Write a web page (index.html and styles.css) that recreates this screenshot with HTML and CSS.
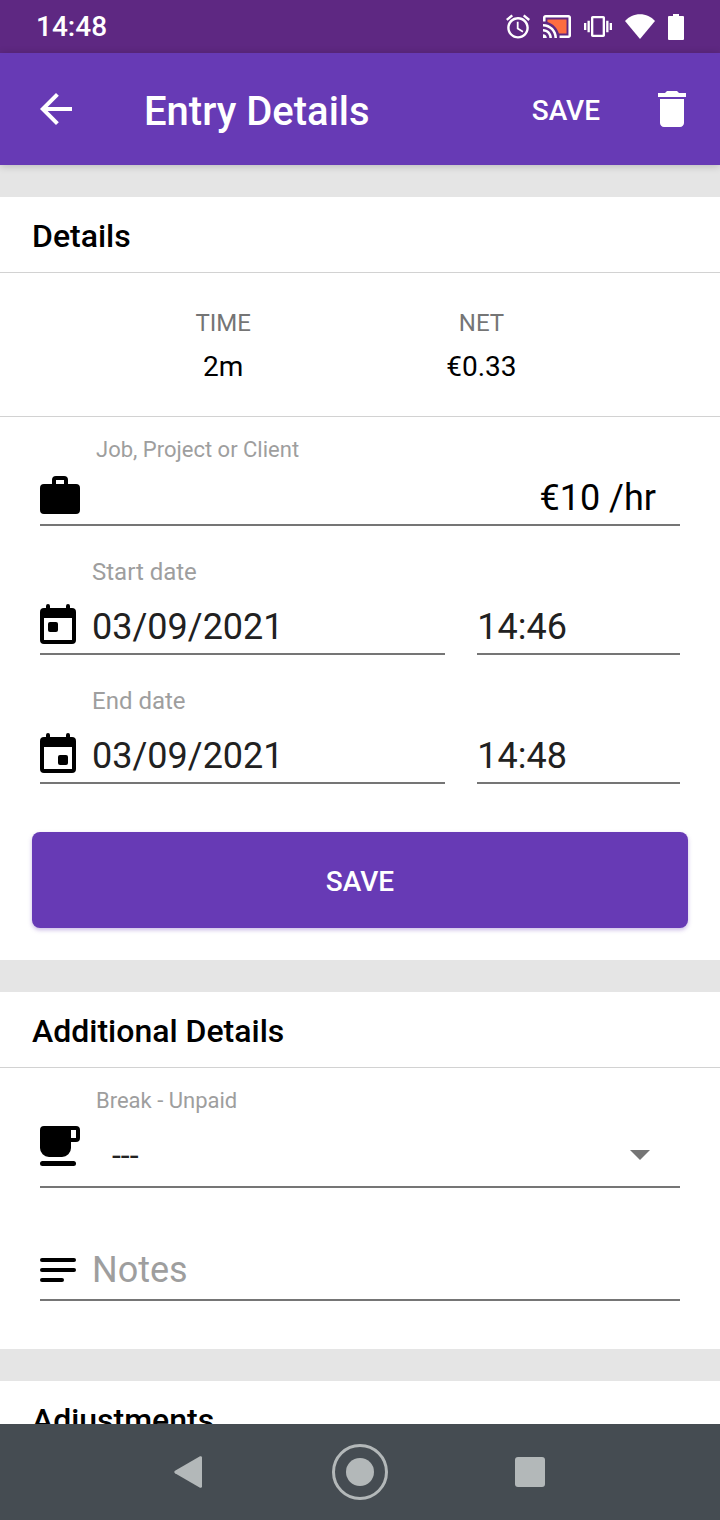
FILE: index.html
```html
<!DOCTYPE html>
<html lang="en">
<head>
    <meta charset="UTF-8">
    <meta name="viewport" content="width=device-width, initial-scale=1.0">
    <title>Entry Details</title>
    <link rel="stylesheet" href="styles.css">
</head>
<body>
    <div class="status-bar">
        <span>14:48</span>
        <div class="status-icons">
            <svg width="24" height="25" viewBox="2 1.86 20 20.14"><path d="M22 5.72l-4.6-3.86-1.29 1.53 4.6 3.86L22 5.72zM7.88 3.39L6.6 1.86 2 5.71l1.29 1.53 4.59-3.85zM12.5 8H11v6l4.75 2.85.75-1.23-4-2.37V8zM12 4c-4.97 0-9 4.03-9 9s4.02 9 9 9c4.97 0 9-4.03 9-9s-4.03-9-9-9zm0 16c-3.87 0-7-3.13-7-7s3.13-7 7-7 7 3.13 7 7-3.13 7-7 7z"/></svg>
            <svg width="28" height="23" viewBox="1 3 22 18"><path class="cast-fill" d="M19.5 6.5H4.5v2c4.2 1.2 7.6 4.5 9 9H19.5z"/><path d="M1 18v3h3c0-1.66-1.34-3-3-3zm0-4v2c2.76 0 5 2.24 5 5h2c0-3.87-3.13-7-7-7zm0-4v2c4.97 0 9 4.03 9 9h2c0-6.08-4.93-11-11-11zm20-7H3c-1.1 0-2 .9-2 2v3h2V5h18v14h-7v2h7c1.1 0 2-.9 2-2V5c0-1.1-.9-2-2-2z"/></svg>
            <svg width="28" height="21" viewBox="0 3 24 18"><path d="M0 15h2V9H0v6zm3 2h2V7H3v10zm19-8v6h2V9h-2zm-3 8h2V7h-2v10zM16.5 3h-9C6.67 3 6 3.67 6 4.5v15c0 .83.67 1.5 1.5 1.5h9c.83 0 1.5-.67 1.5-1.5v-15c0-.83-.67-1.5-1.5-1.5zM16 19H8V5h8v14z"/></svg>
            <svg width="30" height="26" viewBox="0 0 30 26"><path d="M0 7C4 2.700 9 .3 15 .3s11 2.400 15 6.700L15 25z"/></svg>
            <svg width="16" height="26" viewBox="0 0 16 26"><path d="M5 0h6v2h4a1 1 0 0 1 1 1v22a1 1 0 0 1-1 1H1a1 1 0 0 1-1-1V3a1 1 0 0 1 1-1h4z"/></svg>
        </div>
    </div>

    <header class="toolbar">
        <button type="button" class="icon-button" aria-label="Back">
            <svg width="32" height="32" viewBox="4 4 16 16"><path d="M20 11H7.83l5.59-5.59L12 4l-8 8 8 8 1.41-1.41L7.83 13H20v-2z"/></svg>
        </button>
        <h1>Entry Details</h1>
        <button type="submit" form="entry-form" class="toolbar-save">SAVE</button>
        <button type="button" class="icon-button" aria-label="Delete">
            <svg width="28" height="36" viewBox="5 3 14 18"><path d="M6 19c0 1.1.9 2 2 2h8c1.1 0 2-.9 2-2V7H6v12zM19 4h-3.5l-1-1h-5l-1 1H5v2h14V4z"/></svg>
        </button>
    </header>

    <main class="content">
        <form id="entry-form">
            <section class="card">
                <h2>Details</h2>
                <dl class="summary">
                    <div>
                        <dt>TIME</dt>
                        <dd>2m</dd>
                    </div>
                    <div>
                        <dt>NET</dt>
                        <dd>€0.33</dd>
                    </div>
                </dl>

                <div class="field">
                    <label class="small-label" for="job">Job, Project or Client</label>
                    <div class="field-row job-row">
                        <svg width="40" height="38" viewBox="0 0 40 38"><path fill-rule="evenodd" d="M4 8h8V4a4 4 0 0 1 4-4h8a4 4 0 0 1 4 4v4h8a4 4 0 0 1 4 4v22a4 4 0 0 1-4 4H4a4 4 0 0 1-4-4V12a4 4 0 0 1 4-4zM16 4v4h8V4z"/></svg>
                        <input type="text" id="job" name="job">
                        <span class="rate">€10 /hr</span>
                    </div>
                </div>

                <div class="field date-field">
                    <label class="date-label" for="start-date">Start date</label>
                    <div class="date-time">
                        <div class="field-row">
                            <svg width="36" height="40" viewBox="0 0 36 40"><path fill-rule="evenodd" d="M6 4V2a2 2 0 0 1 4 0v2h16V2a2 2 0 0 1 4 0v2h2a4 4 0 0 1 4 4v28a4 4 0 0 1-4 4H4a4 4 0 0 1-4-4V8a4 4 0 0 1 4-4zM4 14v22h28V14z"/><rect x="8" y="18" width="10" height="10" rx="2"/></svg>
                            <input type="text" id="start-date" name="start_date" value="03/09/2021">
                        </div>
                        <div class="field-row">
                            <input type="text" name="start_time" value="14:46" aria-label="Start time">
                        </div>
                    </div>
                </div>

                <div class="field date-field">
                    <label class="date-label" for="end-date">End date</label>
                    <div class="date-time">
                        <div class="field-row">
                            <svg width="36" height="40" viewBox="0 0 36 40"><path fill-rule="evenodd" d="M6 4V2a2 2 0 0 1 4 0v2h16V2a2 2 0 0 1 4 0v2h2a4 4 0 0 1 4 4v28a4 4 0 0 1-4 4H4a4 4 0 0 1-4-4V8a4 4 0 0 1 4-4zM4 14v22h28V14z"/><rect x="18" y="22" width="10" height="10" rx="2"/></svg>
                            <input type="text" id="end-date" name="end_date" value="03/09/2021">
                        </div>
                        <div class="field-row">
                            <input type="text" name="end_time" value="14:48" aria-label="End time">
                        </div>
                    </div>
                </div>

                <button type="submit" class="save-button">SAVE</button>
            </section>

            <section class="card additional">
                <h2>Additional Details</h2>
                <div class="field">
                    <label class="small-label" for="break">Break - Unpaid</label>
                    <div class="field-row break-row">
                        <svg width="40" height="40" viewBox="0 0 40 40"><path fill-rule="evenodd" d="M4 0h32a4 4 0 0 1 4 4v8a4 4 0 0 1-4 4h-5v6a9 9 0 0 1-9 9H9a9 9 0 0 1-9-9V4a4 4 0 0 1 4-4zM31 4v8h5V4z"/><rect y="35" width="36" height="5" rx="2.5"/></svg>
                        <select id="break" name="break">
                            <option>---</option>
                        </select>
                        <svg class="caret" width="20" height="10" viewBox="0 0 20 10"><path d="M0 0h20L10 10z"/></svg>
                    </div>
                </div>

                <div class="field notes-field">
                    <div class="field-row">
                        <svg width="36" height="24" viewBox="0 0 36 24"><rect width="36" height="4" rx="2"/><rect y="10" width="36" height="4" rx="2"/><rect y="20" width="24" height="4" rx="2"/></svg>
                        <input type="text" name="notes" placeholder="Notes" aria-label="Notes">
                    </div>
                </div>
            </section>

            <section class="card">
                <h2>Adjustments</h2>
            </section>
        </form>
    </main>

    <nav class="nav-bar">
        <button type="button" aria-label="Back">
            <svg width="32" height="32" viewBox="0 0 32 32"><path d="M28 1.5v29a1.5 1.5 0 0 1-2 1.2L1 17.2a1.4 1.4 0 0 1 0-2.4L26 .3a1.5 1.5 0 0 1 2 1.2z"/></svg>
        </button>
        <button type="button" aria-label="Home">
            <svg width="56" height="56" viewBox="0 0 56 56"><circle cx="28" cy="28" r="14"/><circle class="ring" cx="28" cy="28" r="26.5"/></svg>
        </button>
        <button type="button" aria-label="Recent apps">
            <svg width="30" height="30" viewBox="0 0 30 30"><rect width="30" height="30" rx="3"/></svg>
        </button>
    </nav>
</body>
</html>
```

FILE: styles.css
```css
* {
    box-sizing: border-box;
}
body {
    display: flex;
    flex-direction: column;
    height: 100vh;
    margin: 0;
    font-family: Roboto, sans-serif;
    color: #000;
    background-color: #e5e5e5;
}
h1, h2, dl, dd {
    margin: 0;
}
svg {
    display: block;
    flex: none;
    fill: currentColor;
}
button, input, select {
    padding: 0;
    border: none;
    outline: none;
    background: none;
    font-family: inherit;
    color: inherit;
}
button {
    cursor: pointer;
}

/* Top bars */
.status-bar {
    display: flex;
    flex: none;
    align-items: center;
    justify-content: space-between;
    height: 53px;
    padding: 0 36px;
    background-color: #5e2882;
    color: #fff;
    font-size: 28px;
    font-weight: 500;
}
.status-icons {
    display: flex;
    align-items: center;
    gap: 13px;
}
.cast-fill {
    fill: #fd6d41;
}
.toolbar {
    display: flex;
    flex: none;
    align-items: center;
    height: 112px;
    padding: 0 34px 0 40px;
    background-color: #673ab5;
    color: #fff;
    box-shadow: 0 1px 8px rgba(0, 0, 0, 0.2);
    z-index: 1;
}
.toolbar h1 {
    flex: 1;
    margin-left: 72px;
    padding-top: 6px;
    font-size: 40px;
    font-weight: 500;
    line-height: 48px;
}
.toolbar-save {
    margin-right: 58px;
    padding-top: 2px;
    font-size: 28px;
    font-weight: 500;
}

/* Scrolling content */
.content {
    flex: 1;
    min-height: 0;
    overflow-y: auto;
    scrollbar-width: none;
}
.card {
    margin-top: 32px;
    padding-bottom: 32px;
    background-color: #fff;
}
.additional {
    padding-bottom: 48px;
}
.card h2 {
    padding: 20px 32px 16px;
    border-bottom: 1px solid #d2d2d2;
    font-size: 32px;
    font-weight: 500;
    line-height: 39px;
}
.summary {
    display: flex;
    justify-content: space-evenly;
    padding: 28px 8px 28px 0;
    border-bottom: 1px solid #d2d2d2;
    text-align: center;
}
.summary dt {
    color: #757575;
    font-size: 24px;
    line-height: 44px;
}
.summary dd {
    font-size: 28px;
    line-height: 43px;
}

/* Fields */
.field {
    padding: 17px 40px 0;
}
.date-field {
    padding-top: 30px;
}
.notes-field {
    padding-top: 57px;
}
.small-label, .date-label {
    display: block;
    color: #9e9e9e;
    line-height: 32px;
}
.small-label {
    margin-bottom: 4px;
    padding-left: 56px;
    font-size: 22px;
}
.date-label {
    margin-bottom: 11px;
    padding-left: 52px;
    font-size: 24px;
}
.date-time {
    display: grid;
    grid-template-columns: minmax(0, 2fr) minmax(0, 1fr);
    gap: 32px;
}
.field-row {
    display: flex;
    align-items: center;
    gap: 16px;
    height: 56px;
    border-bottom: 2px solid #757575;
}
.field-row input, .field-row select {
    flex: 1;
    min-width: 0;
    height: 100%;
    padding-top: 2px;
    color: #212121;
    font-size: 36px;
}
.field-row input::placeholder {
    color: #9e9e9e;
    opacity: 1;
}
.field-row svg:first-child {
    margin-bottom: 4px;
}
.notes-field .field-row input {
    padding: 0 0 4px;
}
.job-row {
    padding-right: 24px;
}
.rate {
    padding-top: 2px;
    font-size: 36px;
}
.break-row {
    height: 67px;
    padding-right: 30px;
}
.break-row svg:first-child {
    margin-bottom: 16px;
}
.break-row select {
    padding-left: 16px;
    appearance: none;
    font-size: 32px;
}
.break-row .caret {
    margin-top: 2px;
    color: #757575;
    pointer-events: none;
}
.save-button {
    display: block;
    width: calc(100% - 64px);
    height: 96px;
    margin: 48px 32px 0;
    padding-top: 2px;
    border-radius: 8px;
    background-color: #673ab5;
    color: #fff;
    font-size: 28px;
    font-weight: 500;
    box-shadow: 0 2px 4px rgba(103, 58, 181, 0.35);
}

/* System navigation */
.nav-bar {
    display: flex;
    flex: none;
    align-items: center;
    justify-content: center;
    gap: 114px;
    height: 96px;
    background-color: #454c52;
    color: #b3b8b9;
}
.nav-bar button {
    display: flex;
    justify-content: center;
    width: 56px;
}
.ring {
    fill: none;
    stroke: currentColor;
    stroke-width: 3;
}
```
